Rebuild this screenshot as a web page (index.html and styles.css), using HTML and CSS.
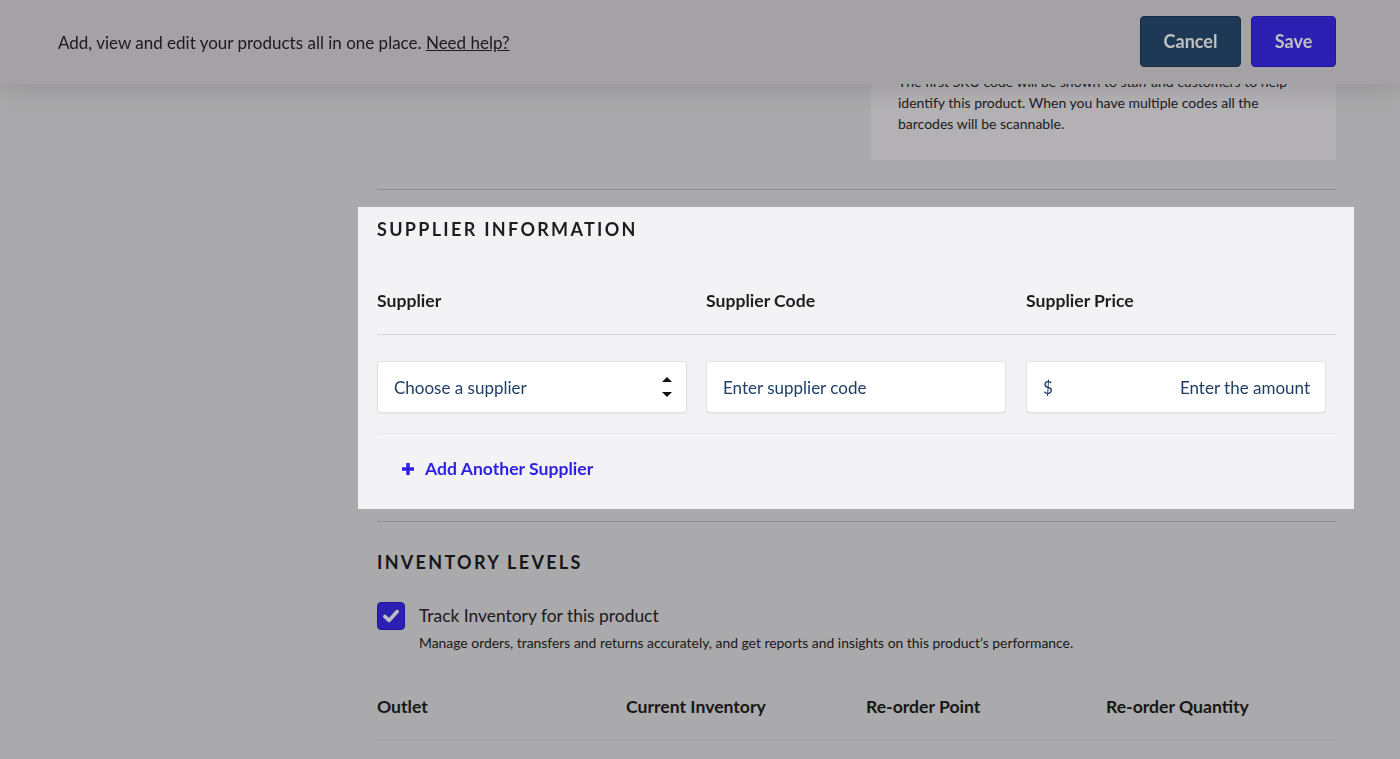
FILE: index.html
```html
<!DOCTYPE html>
<html lang="en">
<head>
    <meta charset="UTF-8">
    <meta name="viewport" content="width=device-width, initial-scale=1.0">
    <title>Edit product</title>
    <link rel="stylesheet" href="styles.css">
</head>
<body>
    <!-- Top action bar -->
    <header class="action-bar">
        <p class="action-bar-text">Add, view and edit your products all in one place. <a href="#" class="help-link">Need help?</a></p>
        <div class="action-bar-buttons">
            <button class="btn btn-cancel">Cancel</button>
            <button class="btn btn-save">Save</button>
        </div>
    </header>

    <div class="page">
        <div class="page-side"></div>

        <main class="page-main">
            <!-- SKU help text -->
            <div class="help-row">
                <div class="help-box">
                    The first SKU code will be shown to staff and customers to help identify this product. When you have multiple codes all the barcodes will be scannable.
                </div>
            </div>

            <hr class="divider">

            <!-- Supplier information (highlighted by the tour) -->
            <section class="section section-spotlight">
                <h2 class="section-title">Supplier Information</h2>

                <div class="grid-head supplier-cols">
                    <div class="col-label">Supplier</div>
                    <div class="col-label">Supplier Code</div>
                    <div class="col-label">Supplier Price</div>
                </div>

                <div class="supplier-cols supplier-row">
                    <div class="field field-select">
                        <span>Choose a supplier</span>
                        <svg class="select-arrows" width="12" height="26" viewBox="0 0 12 26">
                            <path d="M1 8 L6 3 L11 8 Z" fill="#111"/>
                            <path d="M1 18 L6 23 L11 18 Z" fill="#111"/>
                        </svg>
                    </div>
                    <div class="field field-code">Enter supplier code</div>
                    <div class="field field-price">
                        <span>$</span>
                        <span>Enter the amount</span>
                    </div>
                </div>

                <a href="#" class="add-link">
                    <svg width="14" height="14" viewBox="0 0 14 14">
                        <path d="M7 1 V13 M1 7 H13" stroke="currentColor" stroke-width="3.4"/>
                    </svg>
                    Add Another Supplier
                </a>
            </section>

            <hr class="divider divider-tight">

            <!-- Inventory -->
            <section class="section">
                <h2 class="section-title section-title-inv">Inventory Levels</h2>

                <div class="check-row">
                    <span class="checkbox">
                        <svg width="18" height="18" viewBox="0 0 18 18">
                            <path d="M2.8 9.4 L7 13.4 L15.2 4.6" fill="none" stroke="#fff" stroke-width="3.6" stroke-linecap="round" stroke-linejoin="round"/>
                        </svg>
                    </span>
                    <div class="check-text">
                        <div class="check-label">Track Inventory for this product</div>
                        <div class="check-desc">Manage orders, transfers and returns accurately, and get reports and insights on this product’s performance.</div>
                    </div>
                </div>

                <div class="grid-head inventory-cols">
                    <div class="col-label">Outlet</div>
                    <div class="col-label">Current Inventory</div>
                    <div class="col-label">Re-order Point</div>
                    <div class="col-label">Re-order Quantity</div>
                </div>
            </section>
        </main>
    </div>
</body>
</html>
```

FILE: styles.css
```css
* {
    box-sizing: border-box;
    margin: 0;
    padding: 0;
}

body {
    font-family: Lato, "Open Sans", sans-serif;
    background-color: #e3e2e4;
    color: #262528;
    overflow: hidden;
}

/* Top action bar */
.action-bar {
    position: fixed;
    top: 0;
    left: 0;
    right: 0;
    height: 84px;
    z-index: 10;
    display: flex;
    align-items: center;
    justify-content: space-between;
    padding: 0 64px 0 58px;
    background-color: #dbd8dc;
    box-shadow: 0 6px 24px rgba(0,0,0,0.12);
}

.action-bar-text {
    font-size: 17px;
}

.help-link {
    color: inherit;
}

.action-bar-buttons {
    display: flex;
    gap: 10px;
    margin-top: -2px;
}

.btn {
    height: 51px;
    border-radius: 4px;
    font-family: inherit;
    font-size: 18px;
    font-weight: 700;
    color: #fff;
    cursor: pointer;
}

.btn-cancel {
    width: 101px;
    background-color: #294d73;
    border: 1px solid #1f3d5d;
}

.btn-save {
    width: 85px;
    background-color: #3a2bec;
    border: 1px solid #2a1ed0;
}

/* Page layout */
.page {
    display: grid;
    grid-template-columns: 377px 959px;
    height: 100vh;
    padding-top: 47px;
}

.help-row {
    display: flex;
    justify-content: flex-end;
}

.help-box {
    width: 465px;
    padding: 24px 40px 26px 27px;
    background-color: #efedf1;
    font-size: 14px;
    line-height: 21px;
    color: #2a292d;
}

.divider {
    border: none;
    border-top: 1px solid #bebcc0;
    margin-top: 29px;
}

.divider-tight {
    margin-top: 12px;
}

.section-spotlight {
    position: relative;
    z-index: 20;
    margin: 17px -18px 0 -19px;
    padding: 12px 18px 28px 19px;
    background-color: #f3f2f5;
    box-shadow: 0 0 0 300vmax rgba(0,0,0,0.25);
}

.section-title {
    font-size: 18px;
    line-height: 20px;
    font-weight: 700;
    letter-spacing: 2.3px;
    text-transform: uppercase;
    color: #1e1e20;
}

.section-title-inv {
    margin-top: 30px;
}

.grid-head {
    padding-bottom: 20px;
    border-bottom: 1px solid #d6d5d9;
}

.section-spotlight .grid-head {
    margin-top: 50px;
    padding-bottom: 21px;
}

.col-label {
    font-size: 17.6px;
    line-height: 24px;
    font-weight: 700;
    color: #1e1e20;
}

.supplier-cols {
    display: grid;
    grid-template-columns: 329px 320px 1fr;
}

.supplier-row {
    padding: 26px 0 20px;
    border-bottom: 1px solid #e6e5e9;
}

.field {
    height: 52px;
    display: flex;
    align-items: center;
    padding: 0 16px;
    background-color: #fff;
    border: 1px solid #e2e1e5;
    border-radius: 4px;
    box-shadow: 0 1px 2px rgba(0,0,0,0.06);
    font-size: 17px;
    color: #1f3f66;
}

.field-select {
    width: 310px;
    justify-content: space-between;
    padding-right: 13px;
}

.field-code {
    width: 300px;
}

.field-price {
    width: 300px;
    justify-content: space-between;
    padding-right: 15px;
}

.add-link {
    display: inline-flex;
    align-items: center;
    gap: 10px;
    margin: 23px 0 0 24px;
    font-size: 17.6px;
    line-height: 24px;
    font-weight: 700;
    color: #2d1fe6;
    text-decoration: none;
}

/* Inventory */
.check-row {
    display: flex;
    align-items: flex-start;
    gap: 14px;
    margin-top: 30px;
}

.checkbox {
    width: 28px;
    height: 28px;
    flex-shrink: 0;
    display: flex;
    align-items: center;
    justify-content: center;
    background-color: #3a2bec;
    border: 1px solid #2a1ed0;
    border-radius: 4px;
}

.check-text {
    padding-top: 2px;
}

.check-label {
    font-size: 17.4px;
    line-height: 24px;
}

.check-desc {
    margin-top: 5px;
    font-size: 13.9px;
    line-height: 20px;
}

.inventory-cols {
    display: grid;
    grid-template-columns: 249px 240px 240px 1fr;
    margin-top: 42px;
}
```
